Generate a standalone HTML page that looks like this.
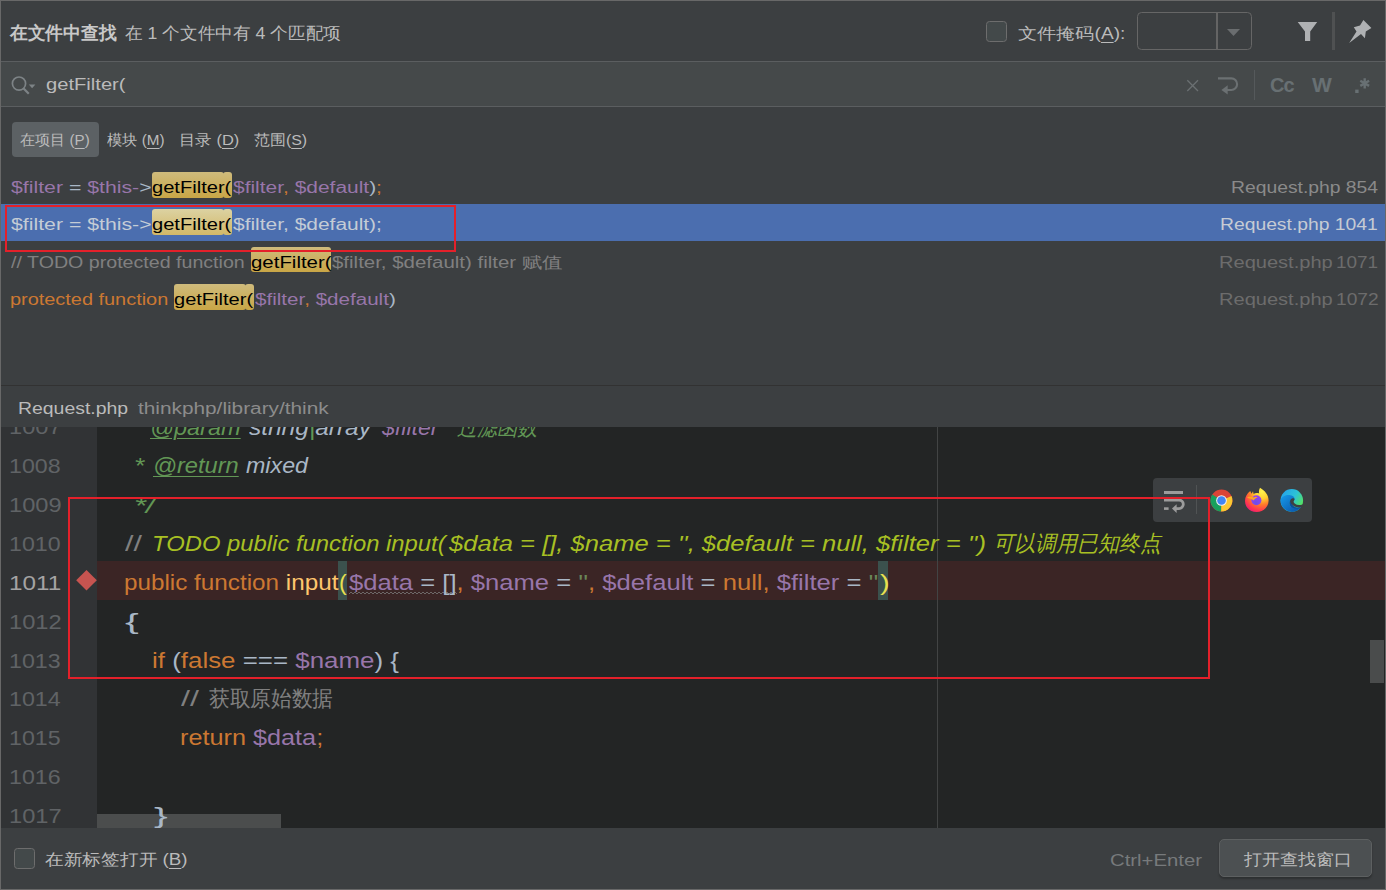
<!DOCTYPE html>
<html><head><meta charset="utf-8">
<style>
html,body{margin:0;padding:0}
body{width:1386px;height:890px;overflow:hidden;background:#3c3f41;position:relative;font-family:"Liberation Sans",sans-serif}
.a{position:absolute}
.t{position:absolute;white-space:pre;line-height:1;transform-origin:0 0;font-family:"Liberation Sans",sans-serif}
.t u{text-decoration:underline;text-underline-offset:3px;text-decoration-thickness:1.4px}
.hl{position:absolute;border-radius:3px;background:linear-gradient(#cfbb7c,#c9a646)}
.hls{position:absolute;border-radius:3px;background:linear-gradient(#dcd2a2,#d2b868)}
</style></head><body>
<!-- frame -->
<div class="a" style="left:0;top:0;width:1384px;height:888px;border:1px solid #686868"></div>
<!-- title separator -->
<div class="a" style="left:1px;top:61px;width:1384px;height:1px;background:#5b5e60"></div>
<!-- search field -->
<div class="a" style="left:1px;top:62px;width:1384px;height:44px;background:#45494a"></div>
<div class="a" style="left:1px;top:106px;width:1384px;height:1px;background:#5b5e60"></div>
<!-- checkbox -->
<div class="a" style="left:985.5px;top:21px;width:19px;height:19px;border:1.5px solid #6d6d6d;border-radius:3.5px;background:#43494a"></div>
<!-- combo -->
<div class="a" style="left:1137px;top:12px;width:112.6px;height:35.6px;border:1.7px solid #666666;border-radius:4.5px;background:#3c3f41"></div>
<div class="a" style="left:1216px;top:13px;width:1.5px;height:37px;background:#646464"></div>
<svg class="a" style="left:1226px;top:28px" width="16" height="10"><path d="M1 1 L14 1 L7.5 8 Z" fill="#6a6d6f"/></svg>
<!-- filter icon -->
<svg class="a" style="left:1290px;top:15px" width="34" height="34"><path d="M7.7 7 L27.2 7 L20.2 16.4 L20.2 26 L15 26 L15 16.4 Z" fill="#afb1b3"/></svg>
<div class="a" style="left:1332px;top:12px;width:3px;height:38px;background:#4f5152"></div>
<!-- pin icon -->
<svg class="a" style="left:1340px;top:10px" width="40" height="40"><path d="M9.2 33 L16.5 21.4 L13.8 17.2 L20 15.5 L23.4 9.9 L31.4 17.9 L25.8 21.5 L24.9 28.3 L21 24 Z" fill="#afb1b3"/></svg>
<!-- search icon -->
<svg class="a" style="left:8px;top:72px" width="32" height="26"><circle cx="11" cy="11.6" r="6.6" fill="none" stroke="#7d8386" stroke-width="1.7"/><path d="M15.6 16.4 L20.8 21.8" stroke="#7d8386" stroke-width="2.2"/><path d="M20.8 12.6 L27.4 12.6 L24.1 16.3 Z" fill="#7d8386"/></svg>
<!-- search right icons -->
<svg class="a" style="left:1180px;top:70px" width="200" height="30">
<path d="M7.3 10.3 L18 21 M18 10.3 L7.3 21" stroke="#6b7072" stroke-width="1.3"/>
<path d="M38 8.4 L51.3 8.4 A5.8 5.8 0 0 1 51.3 20 L46 20" fill="none" stroke="#6b7072" stroke-width="2.1"/>
<path d="M47.7 15.2 L47.7 24.6 L41.4 19.9 Z" fill="#6b7072"/>
<rect x="74" y="0" width="1" height="30" fill="#55595b"/>
</svg>
<div class="a" style="left:1270px;top:73px;font:bold 21px 'Liberation Sans';color:#687073;letter-spacing:-1px;transform:scaleX(0.95);transform-origin:0 0">Cc</div>
<div class="a" style="left:1312px;top:73px;font:bold 21px 'Liberation Sans';color:#687073">W</div>
<svg class="a" style="left:1352px;top:74px" width="24" height="24">
<rect x="3.2" y="15.6" width="3.4" height="3.4" fill="#687073"/>
<path d="M12.7 4.2 L12.7 14.4 M8.3 6.7 L17.1 11.9 M17.1 6.7 L8.3 11.9" stroke="#687073" stroke-width="2.4"/>
</svg>
<!-- scope button -->
<div class="a" style="left:12px;top:122px;width:87px;height:35px;border-radius:4px;background:#5c6164"></div>
<!-- selected row -->
<div class="a" style="left:1px;top:204px;width:1384px;height:37px;background:#4b6eaf"></div>
<!-- highlight boxes -->
<div class="hl" style="left:152px;top:172px;width:72px;height:26px"></div><div class="hl" style="left:223px;top:172px;width:9px;height:26px"></div>
<div class="hls" style="left:152px;top:209px;width:72px;height:26px"></div><div class="hls" style="left:223px;top:209px;width:9px;height:26px"></div>
<div class="hl" style="left:251px;top:247px;width:80px;height:25px"></div>
<div class="hl" style="left:174px;top:284px;width:72px;height:26px"></div><div class="hl" style="left:245px;top:284px;width:9px;height:26px"></div>
<!-- sep above header -->
<div class="a" style="left:1px;top:385px;width:1384px;height:1px;background:#323232"></div>
<!-- gutter + code -->
<div class="a" style="left:1px;top:427px;width:96px;height:401px;background:#313335"></div>
<div class="a" style="left:97px;top:427px;width:1288px;height:401px;background:#232525"></div>
<div class="a" style="left:97px;top:561px;width:1288px;height:39px;background:#3b2525"></div>
<div class="a" style="left:937px;top:427px;width:1px;height:401px;background:#424444"></div>
<!-- brace match -->
<div class="a" style="left:338px;top:561px;width:9px;height:39px;background:#3b514d"></div>
<div class="a" style="left:878px;top:561px;width:10px;height:39px;background:#3b514d"></div>
<!-- breakpoint -->
<svg class="a" style="left:75px;top:569px" width="24" height="24"><path d="M11.5 1 L21.8 11.3 L11.5 21.6 L1.2 11.3 Z" fill="#c75450"/></svg>
<!-- wavy underline -->
<svg class="a" style="left:349px;top:591px" width="110" height="5"><path d="M0 3 L2 1 L4 3 L6 1 L8 3 L10 1 L12 3 L14 1 L16 3 L18 1 L20 3 L22 1 L24 3 L26 1 L28 3 L30 1 L32 3 L34 1 L36 3 L38 1 L40 3 L42 1 L44 3 L46 1 L48 3 L50 1 L52 3 L54 1 L56 3 L58 1 L60 3 L62 1 L64 3 L66 1 L68 3 L70 1 L72 3 L74 1 L76 3 L78 1 L80 3 L82 1 L84 3 L86 1 L88 3 L90 1 L92 3 L94 1 L96 3 L98 1 L100 3 L102 1 L104 3 L106 1 L108 3" fill="none" stroke="#7a7a7a" stroke-width="0.8"/></svg>
<!-- scrollbars -->
<div class="a" style="left:1370px;top:640px;width:14px;height:43px;background:#4a4c4c"></div>
<div class="a" style="left:97px;top:814px;width:184px;height:14px;background:#4b4d4d"></div>
<div class="a" style="left:0;top:427px;width:1385px;height:401px;overflow:hidden">
<div id="t28" class="t" style="left:9.00px;top:-11px;font-size:21px;color:#606366;font-weight:normal;transform:scaleX(1.1273);">1007</div>
<div id="t29" class="t" style="left:9.00px;top:28px;font-size:21px;color:#606366;font-weight:normal;transform:scaleX(1.1048);">1008</div>
<div id="t30" class="t" style="left:9.00px;top:67px;font-size:21px;color:#606366;font-weight:normal;transform:scaleX(1.1273);">1009</div>
<div id="t31" class="t" style="left:9.00px;top:106px;font-size:21px;color:#606366;font-weight:normal;transform:scaleX(1.1048);">1010</div>
<div id="t32" class="t" style="left:9.00px;top:145px;font-size:21px;color:#a4a3a3;font-weight:normal;transform:scaleX(1.1574);">1011</div>
<div id="t33" class="t" style="left:9.00px;top:184px;font-size:21px;color:#606366;font-weight:normal;transform:scaleX(1.1273);">1012</div>
<div id="t34" class="t" style="left:9.00px;top:223px;font-size:21px;color:#606366;font-weight:normal;transform:scaleX(1.1048);">1013</div>
<div id="t35" class="t" style="left:9.00px;top:261px;font-size:21px;color:#606366;font-weight:normal;transform:scaleX(1.1048);">1014</div>
<div id="t36" class="t" style="left:9.00px;top:300px;font-size:21px;color:#606366;font-weight:normal;transform:scaleX(1.1048);">1015</div>
<div id="t37" class="t" style="left:9.00px;top:339px;font-size:21px;color:#606366;font-weight:normal;transform:scaleX(1.1048);">1016</div>
<div id="t38" class="t" style="left:9.00px;top:378px;font-size:21px;color:#606366;font-weight:normal;transform:scaleX(1.1273);">1017</div>
<div id="t39" class="t" style="left:150.40px;top:-10px;font-size:22px;color:#bbbbbb;font-weight:normal;transform:scaleX(1.0708);"><span style="color:#629755;font-style:italic;text-decoration:underline;text-underline-offset:3px;text-decoration-thickness:1px;">@param</span></div>
<div id="t40" class="t" style="left:249.00px;top:-10px;font-size:22px;color:#bbbbbb;font-weight:normal;transform:scaleX(1.1118);"><span style="color:#a9b7c6;font-style:italic;">string</span><span style="color:#629755;font-style:italic;">|</span><span style="color:#a9b7c6;font-style:italic;">array</span></div>
<div id="t41" class="t" style="left:382.40px;top:-10px;font-size:22px;color:#bbbbbb;font-weight:normal;transform:scaleX(1.0510);"><span style="color:#9876aa;font-style:italic;">$filter</span></div>
<div id="t42" class="t" style="left:457.20px;top:-10px;font-size:22px;color:#bbbbbb;font-weight:normal;transform:scaleX(0.9146);"><span style="color:#629755;font-style:italic;">过滤函数</span></div>
<div id="t43" class="t" style="left:133.70px;top:28px;font-size:22px;color:#bbbbbb;font-weight:normal;transform:scaleX(1.1961);"><span style="color:#629755;font-style:italic;">*</span></div>
<div id="t44" class="t" style="left:152.80px;top:28px;font-size:22px;color:#bbbbbb;font-weight:normal;transform:scaleX(1.0740);"><span style="color:#629755;font-style:italic;text-decoration:underline;text-underline-offset:3px;text-decoration-thickness:1px;">@return</span></div>
<div id="t45" class="t" style="left:246.40px;top:28px;font-size:22px;color:#bbbbbb;font-weight:normal;transform:scaleX(1.0561);"><span style="color:#a9b7c6;font-style:italic;">mixed</span></div>
<div id="t46" class="t" style="left:133.70px;top:68px;font-size:22px;color:#bbbbbb;font-weight:normal;transform:scaleX(1.4000);"><span style="color:#629755;font-style:italic;">*/</span></div>
<div id="t47" class="t" style="left:124.90px;top:106px;font-size:22px;color:#bbbbbb;font-weight:normal;transform:scaleX(1.3857);"><span style="color:#808080;">//</span></div>
<div id="t48" class="t" style="left:152.30px;top:106px;font-size:22px;color:#bbbbbb;font-weight:normal;transform:scaleX(1.0834);"><span style="color:#a8c023;font-style:italic;">TODO public function input(</span></div>
<div id="t49" class="t" style="left:448.50px;top:106px;font-size:22px;color:#bbbbbb;font-weight:normal;transform:scaleX(1.1623);"><span style="color:#a8c023;font-style:italic;">$data = [], $name = '', $default = null, $filter = '')</span></div>
<div id="t50" class="t" style="left:993.30px;top:106px;font-size:22px;color:#bbbbbb;font-weight:normal;transform:scaleX(0.9523);"><span style="color:#a8c023;font-style:italic;">可以调用已知终点</span></div>
<div id="t51" class="t" style="left:123.90px;top:145px;font-size:22px;color:#bbbbbb;font-weight:normal;transform:scaleX(1.1026);"><span style="color:#cc7832;">public function </span><span style="color:#ffc66d;">input</span></div>
<div id="t52" class="t" style="left:338.60px;top:145px;font-size:22px;color:#bbbbbb;font-weight:normal;transform:scaleX(1.0403);"><span style="color:#e8e050;">(</span></div>
<div id="t53" class="t" style="left:349.30px;top:145px;font-size:22px;color:#bbbbbb;font-weight:normal;transform:scaleX(1.1641);"><span style="color:#9876aa;">$data</span><span style="color:#a9b7c6;"> = []</span><span style="color:#cc7832;">, </span><span style="color:#9876aa;">$name</span><span style="color:#a9b7c6;"> = </span><span style="color:#6a8759;">''</span><span style="color:#cc7832;">, </span><span style="color:#9876aa;">$default</span><span style="color:#a9b7c6;"> = </span><span style="color:#cc7832;">null</span><span style="color:#cc7832;">, </span><span style="color:#9876aa;">$filter</span><span style="color:#a9b7c6;"> = </span><span style="color:#6a8759;">''</span></div>
<div id="t54" class="t" style="left:880.00px;top:145px;font-size:22px;color:#bbbbbb;font-weight:normal;transform:scaleX(1.3232);"><span style="color:#e8e050;">)</span></div>
<div id="t55" class="t" style="left:125.20px;top:184px;font-size:22px;color:#bbbbbb;font-weight:normal;transform:scaleX(1.8701);"><span style="color:#a9b7c6;">{</span></div>
<div id="t56" class="t" style="left:152.20px;top:223px;font-size:22px;color:#bbbbbb;font-weight:normal;transform:scaleX(1.1771);"><span style="color:#cc7832;">if </span><span style="color:#a9b7c6;">(</span><span style="color:#cc7832;">false</span><span style="color:#a9b7c6;"> === </span><span style="color:#9876aa;">$name</span><span style="color:#a9b7c6;">) {</span></div>
<div id="t57" class="t" style="left:180.70px;top:261px;font-size:22px;color:#bbbbbb;font-weight:normal;transform:scaleX(1.4689);"><span style="color:#808080;">//</span></div>
<div id="t58" class="t" style="left:209.30px;top:261px;font-size:22px;color:#bbbbbb;font-weight:normal;transform:scaleX(0.9405);"><span style="color:#808080;">获取原始数据</span></div>
<div id="t59" class="t" style="left:180.00px;top:300px;font-size:22px;color:#bbbbbb;font-weight:normal;transform:scaleX(1.1476);"><span style="color:#cc7832;">return </span><span style="color:#9876aa;">$data</span><span style="color:#cc7832;">;</span></div>
<div id="t60" class="t" style="left:153.70px;top:378px;font-size:22px;color:#bbbbbb;font-weight:normal;transform:scaleX(1.8701);"><span style="color:#a9b7c6;">}</span></div>
</div>
<div id="t0" class="t" style="left:9.60px;top:24px;font-size:18px;color:#c8c8c8;font-weight:bold;transform:scaleX(0.9861);">在文件中查找</div>
<div id="t1" class="t" style="left:124.70px;top:25px;font-size:17px;color:#bbbbbb;font-weight:normal;transform:scaleX(1.0386);">在 1 个文件中有 4 个匹配项</div>
<div id="t2" class="t" style="left:1018.00px;top:26px;font-size:16px;color:#bbbbbb;font-weight:normal;transform:scaleX(1.1955);">文件掩码(<u>A</u>):</div>
<div id="t3" class="t" style="left:46.00px;top:77px;font-size:16px;color:#bbbbbb;font-weight:normal;transform:scaleX(1.2598);">getFilter(</div>
<div id="t4" class="t" style="left:19.80px;top:132px;font-size:15px;color:#bbbbbb;font-weight:normal;transform:scaleX(1.0076);">在项目 (<u>P</u>)</div>
<div id="t5" class="t" style="left:106.80px;top:132px;font-size:15px;color:#bbbbbb;font-weight:normal;transform:scaleX(1.0179);">模块 (<u>M</u>)</div>
<div id="t6" class="t" style="left:178.60px;top:132px;font-size:15px;color:#bbbbbb;font-weight:normal;transform:scaleX(1.0962);">目录 (<u>D</u>)</div>
<div id="t7" class="t" style="left:254.00px;top:132px;font-size:15px;color:#bbbbbb;font-weight:normal;transform:scaleX(1.0625);">范围(<u>S</u>)</div>
<div id="t8" class="t" style="left:10.80px;top:180px;font-size:16px;color:#bbbbbb;font-weight:normal;transform:scaleX(1.3286);"><span style="color:#9876aa;">$filter</span><span style="color:#a9b7c6;"> = </span><span style="color:#9876aa;">$this</span><span style="color:#9876aa;">-</span><span style="color:#a9b7c6;">&gt;</span></div>
<div id="t9" class="t" style="left:151.70px;top:180px;font-size:16px;color:#000;font-weight:normal;transform:scaleX(1.2565);">getFilter(</div>
<div id="t10" class="t" style="left:232.90px;top:180px;font-size:16px;color:#bbbbbb;font-weight:normal;transform:scaleX(1.3080);"><span style="color:#9876aa;">$filter</span><span style="color:#cc7832;">, </span><span style="color:#9876aa;">$default</span><span style="color:#a9b7c6;">)</span><span style="color:#cc7832;">;</span></div>
<div id="t11" class="t" style="left:10.80px;top:217px;font-size:16px;color:#c4ccd6;font-weight:normal;transform:scaleX(1.3286);">$filter = $this-></div>
<div id="t12" class="t" style="left:151.70px;top:217px;font-size:16px;color:#000;font-weight:normal;transform:scaleX(1.2565);">getFilter(</div>
<div id="t13" class="t" style="left:232.90px;top:217px;font-size:16px;color:#c4ccd6;font-weight:normal;transform:scaleX(1.3080);">$filter, $default);</div>
<div id="t14" class="t" style="left:10.80px;top:255px;font-size:16px;color:#808080;font-weight:normal;transform:scaleX(1.2263);">// TODO protected function</div>
<div id="t15" class="t" style="left:250.70px;top:255px;font-size:16px;color:#000;font-weight:normal;transform:scaleX(1.2759);">getFilter(</div>
<div id="t16" class="t" style="left:331.50px;top:255px;font-size:16px;color:#808080;font-weight:normal;transform:scaleX(1.2778);">$filter, $default) filter 赋值</div>
<div id="t17" class="t" style="left:9.80px;top:292px;font-size:16px;color:#cc7832;font-weight:normal;transform:scaleX(1.2440);">protected function</div>
<div id="t18" class="t" style="left:174.30px;top:292px;font-size:16px;color:#000;font-weight:normal;transform:scaleX(1.2532);">getFilter(</div>
<div id="t19" class="t" style="left:255.00px;top:292px;font-size:16px;color:#bbbbbb;font-weight:normal;transform:scaleX(1.2863);"><span style="color:#9876aa;">$filter</span><span style="color:#cc7832;">, </span><span style="color:#9876aa;">$default</span><span style="color:#a9b7c6;">)</span></div>
<div id="t20" class="t" style="left:1231.00px;top:180px;font-size:16px;color:#8a8a8a;font-weight:normal;transform:scaleX(1.2066);">Request.php 854</div>
<div id="t21" class="t" style="left:1220.40px;top:217px;font-size:16px;color:#c6cbd4;font-weight:normal;transform:scaleX(1.2062);">Request.php 1041</div>
<div id="t22" class="t" style="left:1219.40px;top:255px;font-size:16px;color:#6c6c6c;font-weight:normal;transform:scaleX(1.2529);">Request.php</div>
<div id="t23" class="t" style="left:1336.00px;top:255px;font-size:16px;color:#6c6c6c;font-weight:normal;transform:scaleX(1.1826);">1071</div>
<div id="t24" class="t" style="left:1219.40px;top:292px;font-size:16px;color:#6c6c6c;font-weight:normal;transform:scaleX(1.2529);">Request.php</div>
<div id="t25" class="t" style="left:1336.00px;top:292px;font-size:16px;color:#6c6c6c;font-weight:normal;transform:scaleX(1.1971);">1072</div>
<div id="t26" class="t" style="left:17.50px;top:401px;font-size:16px;color:#bbbbbb;font-weight:normal;transform:scaleX(1.2136);">Request.php</div>
<div id="t27" class="t" style="left:137.70px;top:401px;font-size:16px;color:#8c8c8c;font-weight:normal;transform:scaleX(1.2994);">thinkphp/library/think</div>
<!-- floating toolbar -->
<div class="a" style="left:1153px;top:478px;width:159px;height:44px;border-radius:4px;background:#3c3f41"></div>
<svg class="a" style="left:1160px;top:486px" width="30" height="30">
<rect x="4" y="5" width="19" height="3" fill="#9c9c9c"/>
<path d="M4 14 L19 14 A4.3 4.3 0 0 1 19 22.6 L15.5 22.6" fill="none" stroke="#9c9c9c" stroke-width="2.8"/>
<rect x="4" y="21.3" width="4.6" height="2.6" fill="#9c9c9c"/>
<path d="M16.6 18.3 L16.6 26.9 L12 22.6 Z" fill="#9c9c9c"/>
</svg>
<div class="a" style="left:1196px;top:485px;width:1px;height:29px;background:#505354"></div>
<!-- chrome -->
<svg class="a" style="left:1210px;top:489px" width="23" height="23" viewBox="0 0 24 24">
<circle cx="12" cy="12" r="11.4" fill="#db4437"/>
<path d="M12 12 L2.4 5.8 A11.4 11.4 0 0 0 11.6 23.4 Z" fill="#17a05d"/>
<path d="M12 12 L11.6 23.4 A11.4 11.4 0 0 0 22.4 7.4 Z" fill="#fbc832"/>
<circle cx="12" cy="12" r="5.6" fill="#f1f1f1"/><circle cx="12" cy="12" r="4.5" fill="#4285f4"/>
</svg>
<!-- firefox -->
<svg class="a" style="left:1244px;top:487px" width="26" height="27" viewBox="0 0 26 27">
<defs>
<radialGradient id="ff1" cx="0.72" cy="0.15" r="1.0"><stop offset="0" stop-color="#fff44f"/><stop offset="0.3" stop-color="#ffd030"/><stop offset="0.55" stop-color="#ff7a2a"/><stop offset="0.8" stop-color="#ff3550"/><stop offset="1" stop-color="#e5137f"/></radialGradient>
<radialGradient id="ff2" cx="0.45" cy="0.75" r="0.9"><stop offset="0" stop-color="#6b4fe8"/><stop offset="1" stop-color="#a83cf0"/></radialGradient>
</defs>
<path d="M16 0.8 C15 2.6 14.6 4.6 15.2 6.4 C13.4 5.6 11 5.8 9.6 7 L9 4.2 L7.6 6.8 L6.2 4 C3 6.6 1 10 1 14 C1 20.6 6.2 25 12.6 25 C19.2 25 24.6 20 24.6 13.4 C24.6 8.2 21 3.6 16 0.8 Z" fill="url(#ff1)"/>
<circle cx="12.4" cy="13.3" r="5" fill="url(#ff2)"/>
<path d="M3 10.2 C5 9.4 8 9.6 10 10.6 C11 9.6 12.6 9.6 13.6 10.4 C11.6 10.8 10.2 12 9.8 13.6 C8.6 12.8 7.2 12 6.2 11.6 C5 11.4 3.8 11 3 10.2 Z" fill="#ffa424"/>
</svg>
<!-- edge -->
<svg class="a" style="left:1280px;top:488px" width="24" height="25" viewBox="0 0 24 25">
<defs><linearGradient id="eg1" x1="0.15" y1="0.1" x2="0.95" y2="0.6"><stop offset="0" stop-color="#26a6e8"/><stop offset="0.55" stop-color="#2cc3d6"/><stop offset="1" stop-color="#52e06a"/></linearGradient>
<linearGradient id="eg2" x1="0" y1="0.3" x2="0.7" y2="1"><stop offset="0" stop-color="#1490e0"/><stop offset="1" stop-color="#0c5cb0"/></linearGradient></defs>
<clipPath id="ec"><circle cx="11.8" cy="12.4" r="11.3"/></clipPath>
<circle cx="11.8" cy="12.4" r="11.3" fill="url(#eg1)"/>
<path clip-path="url(#ec)" d="M11 16 C14 20 19 20.4 24 17.6 L24 25 L11 25 Z" fill="#0d5fb4"/>
<path d="M0.6 12 C1.8 8.6 5.4 6.8 9.4 7 C12.6 7.2 14.6 9 14.8 11.4 C11.6 11 9.2 13 9.4 15.6 C9.6 19 13.6 21.4 19.6 20.6 C17.6 22.6 14.8 23.7 11.8 23.7 C5.6 23.7 0.5 18.6 0.6 12 Z" fill="url(#eg2)"/>
<path d="M9.4 15.6 C9.2 13 11.6 11 14.8 11.4 C12.4 12.2 11.6 14.2 12.4 16.4 C13.6 19.4 17 20.6 21 19.2 C20.6 19.8 20.2 20.2 19.6 20.6 C13.6 21.4 9.6 19 9.4 15.6 Z" fill="#0c4f9a"/>
<path d="M10.2 12.6 C10.6 10.6 12.6 9.6 14.2 10.6 C14.6 12 14.2 12.6 13.6 13.4 C13.6 15 15.6 16.8 19.2 17 C21 17 22.4 16.6 23.4 16 L23.4 18.6 C21.4 19.6 17 20 13.8 18 C11.6 16.6 10 14.6 10.2 12.6 Z" fill="#3c3f41"/>
</svg>
<!-- red rectangles -->
<div class="a" style="left:5px;top:205px;width:447px;height:43px;border:2px solid #e4202a"></div>
<div class="a" style="left:68px;top:497px;width:1138px;height:178px;border:2px solid #e4202a"></div>
<!-- bottom bar -->
<div class="a" style="left:1px;top:828px;width:1384px;height:60px;background:#3c3f41"></div>
<div class="a" style="left:13.7px;top:848px;width:19px;height:19px;border:1.5px solid #6d6d6d;border-radius:3.5px;background:#43494a"></div>
<div class="a" style="left:1219px;top:839px;width:151px;height:35.5px;border:1.7px solid #5d6061;border-radius:5px;background:#4c5052;box-shadow:0 1.5px 2px rgba(0,0,0,0.25)"></div>
<div id="t61" class="t" style="left:45.00px;top:852px;font-size:16px;color:#bbbbbb;font-weight:normal;transform:scaleX(1.1708);">在新标签打开 (<u>B</u>)</div>
<div id="t62" class="t" style="left:1109.70px;top:853px;font-size:16px;color:#777a7c;font-weight:normal;transform:scaleX(1.2709);">Ctrl+Enter</div>
<div id="t63" class="t" style="left:1244.40px;top:852px;font-size:16px;color:#bbbbbb;font-weight:normal;transform:scaleX(1.1280);">打开查找窗口</div>
</body></html>
